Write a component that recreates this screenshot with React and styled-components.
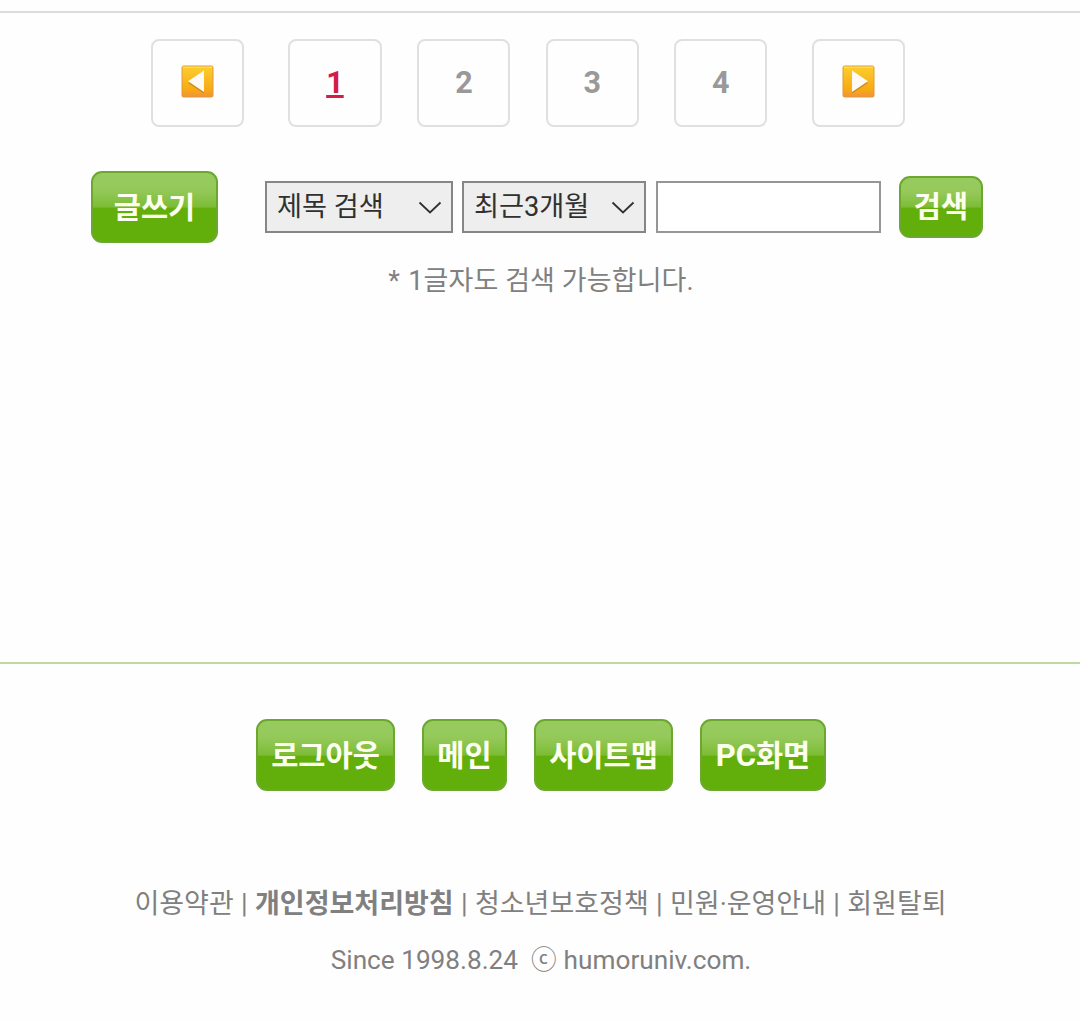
import React from "react";
import styled, { createGlobalStyle } from "styled-components";

const GlobalStyle = createGlobalStyle`
  * { box-sizing: border-box; }
  body {
    margin: 0;
    background: #fefefe;
    color: #808080;
    font-family: Roboto, "Noto Sans CJK KR", sans-serif;
    font-size: 27px;
  }
`;

const Page = styled.div`
  display: flex;
  flex-direction: column;
  height: 1021px;
  padding-top: 11px;
  overflow: hidden;
`;

const Pager = styled.nav`
  display: flex;
  gap: 35.45px;
  height: 116px;
  padding: 26px 0 0 151px;
  border-top: 2px solid #dcdcdc;
`;

const PageBox = styled.a`
  display: flex;
  align-items: center;
  justify-content: center;
  width: ${(p) => (p.$current ? 94 : 93)}px;
  height: 88px;
  margin-left: ${(p) => p.$before || 0}px;
  padding-bottom: 1px;
  border: 2px solid #e0e0e0;
  border-radius: 8px;
  color: ${(p) => (p.$current ? "#d41c49" : "#999")};
  font-size: 30.5px;
  font-weight: 700;
  line-height: 40px;
  text-decoration: ${(p) => (p.$current ? "underline" : "none")};
  text-decoration-thickness: 3px;
  text-underline-offset: 2px;
  svg { display: block; margin-bottom: 3px; }
`;

const Button = styled.button`
  flex: none;
  width: ${(p) => p.$width}px;
  height: ${(p) => p.$height || 72}px;
  padding: ${(p) => (p.$lift ? 0 : 2)}px 0 ${(p) => p.$lift || 0}px;
  border: 2px solid #6ca82f;
  border-radius: 11px;
  background: linear-gradient(#98cb60 0%, #94c95a 25%, #7dbc35 50%, #62af0b 52%, #62af0b 100%);
  color: #fcffee;
  font-family: inherit;
  font-size: 29.5px;
  font-weight: 700;
  line-height: 40px;
  white-space: nowrap;
`;

const Latin = styled.span`
  font-size: 31px;
`;

const SearchForm = styled.form`
  display: flex;
  align-items: center;
  height: 72px;
  margin: 44px 0 0 91px;
`;

const SelectBox = styled.label`
  position: relative;
  width: ${(p) => p.$width}px;
  height: 52px;
  margin-left: ${(p) => p.$before}px;
  svg {
    position: absolute;
    right: 11px;
    top: 19px;
    pointer-events: none;
  }
`;

const Select = styled.select`
  appearance: none;
  display: block;
  width: 100%;
  height: 100%;
  padding: 0 0 1px 10px;
  border: 2px solid #868686;
  border-radius: 0;
  background: #eee;
  color: #303030;
  font-family: inherit;
  font-size: 27.2px;
`;

const Query = styled.input`
  width: 225px;
  height: 52px;
  margin: 0 18px 0 10px;
  border: 2px solid #969696;
  border-radius: 0;
  background: #fff;
  font: inherit;
`;

const Hint = styled.p`
  margin: 18px 0 0 2px;
  text-align: center;
  line-height: 40px;
  letter-spacing: 0.1px;
`;

const Star = styled.span`
  margin-right: 1.5px;
`;

const Footer = styled.footer`
  display: flex;
  flex-direction: column;
  align-items: center;
  margin-top: 361px;
  padding-top: 55px;
  border-top: 2px solid #bfdaa0;
`;

const FooterButtons = styled.div`
  display: flex;
  gap: 27px;
  padding-left: 2px;
`;

const Links = styled.div`
  display: flex;
  gap: 7.3px;
  margin: 93px 0 0 1px;
  line-height: 40px;
  white-space: nowrap;
`;

const Link = styled.a`
  font-weight: ${(p) => (p.$strong ? 700 : 400)};
`;

const Copyright = styled.p`
  margin: 16px 0 0 2px;
  font-size: 26.2px;
  line-height: 40px;
  white-space: pre;
`;

const CircledC = styled.span`
  margin-right: 0.5px;
  font-size: 25.6px;
`;

function Triangle({ left }) {
  const id = left ? "amber-left" : "amber-right";
  return (
    <svg width="33" height="33" viewBox="0 0 33 33">
      <defs>
        <linearGradient id={id} x1="0" y1="0" x2="0" y2="1">
          <stop offset="0" stopColor="#fdce2e" />
          <stop offset="0.8" stopColor="#f6a814" />
          <stop offset="1" stopColor="#f28f43" />
        </linearGradient>
      </defs>
      <rect x="1" y="1" width="31" height="31" rx="1.5" fill={`url(#${id})`} stroke="#dd9a3c" />
      <path d="M2 2.2H31" stroke="#ffe36a" strokeWidth="1" />
      <g transform={left ? "translate(33 0) scale(-1 1)" : undefined}>
        <path d="M10 7V28L26 17.5Z" fill="#b97718" opacity="0.65" transform="translate(0 0.5)" />
        <path d="M10 5.5V27L26 16.3Z" fill="#fdfaf5" />
      </g>
    </svg>
  );
}

function Chevron() {
  return (
    <svg width="24" height="14" viewBox="0 0 24 14" fill="none">
      <path d="M1.5 2.5L12 12.5L22.5 2.5" stroke="#303030" strokeWidth="1.8" />
    </svg>
  );
}

function Dropdown({ label, width, before }) {
  return (
    <SelectBox $width={width} $before={before}>
      <Select>
        <option>{label}</option>
      </Select>
      <Chevron />
    </SelectBox>
  );
}

const LINKS = ["이용약관", "개인정보처리방침", "청소년보호정책", "민원·운영안내", "회원탈퇴"];

export default function App() {
  return (
    <Page>
      <GlobalStyle />
      <Pager>
        <PageBox><Triangle left /></PageBox>
        <PageBox $current $before={8.5}>1</PageBox>
        <PageBox>2</PageBox>
        <PageBox>3</PageBox>
        <PageBox>4</PageBox>
        <PageBox $before={9.25}><Triangle /></PageBox>
      </Pager>
      <SearchForm>
        <Button type="button" $width={127}>글쓰기</Button>
        <Dropdown label="제목 검색" width={188} before={47} />
        <Dropdown label="최근3개월" width={184} before={9} />
        <Query />
        <Button type="button" $width={84} $height={62} $lift={1}>검색</Button>
      </SearchForm>
      <Hint><Star>*</Star> 1글자도 검색 가능합니다.</Hint>
      <Footer>
        <FooterButtons>
          <Button $width={139}>로그아웃</Button>
          <Button $width={85}>메인</Button>
          <Button $width={139}>사이트맵</Button>
          <Button $width={126}><Latin>PC</Latin>화면</Button>
        </FooterButtons>
        <Links>
          {LINKS.map((text, i) => (
            <React.Fragment key={text}>
              {i > 0 && <span>|</span>}
              <Link $strong={i === 1}>{text}</Link>
            </React.Fragment>
          ))}
        </Links>
        <Copyright>
          {"Since 1998.8.24  "}
          <CircledC>ⓒ</CircledC>
          {" humoruniv.com."}
        </Copyright>
      </Footer>
    </Page>
  );
}
